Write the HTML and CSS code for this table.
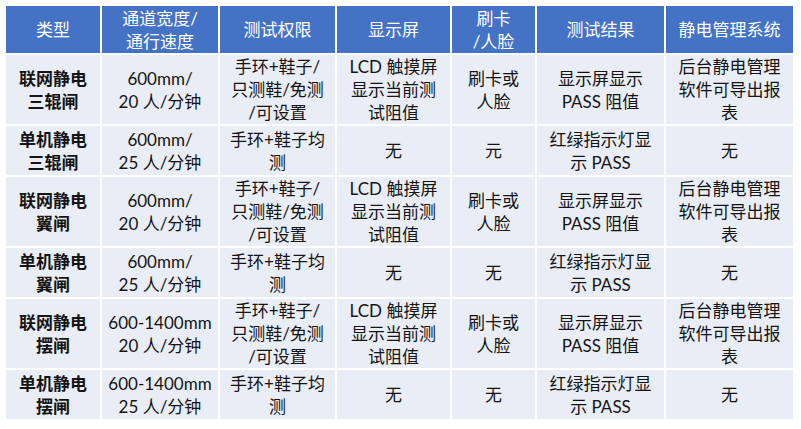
FILE: index.html
```html
<!DOCTYPE html>
<html lang="zh-CN">
<head>
<meta charset="utf-8">
<link rel="stylesheet" href="styles.css">
</head>
<body>
<table class="spec">
  <colgroup>
    <col class="c1"><col class="c2"><col class="c3"><col class="c4"><col class="c5"><col class="c6"><col class="c7">
  </colgroup>
  <thead>
    <tr>
      <th>类型</th>
      <th>通道宽度/<br>通行速度</th>
      <th>测试权限</th>
      <th>显示屏</th>
      <th>刷卡<br>/人脸</th>
      <th>测试结果</th>
      <th>静电管理系统</th>
    </tr>
  </thead>
  <tbody>
    <tr class="r3">
      <td class="type">联网静电<br>三辊闸</td>
      <td>600mm/<br>20 人/分钟</td>
      <td>手环+鞋子/<br>只测鞋/免测<br>/可设置</td>
      <td>LCD 触摸屏<br>显示当前测<br>试阻值</td>
      <td>刷卡或<br>人脸</td>
      <td>显示屏显示<br>PASS 阻值</td>
      <td>后台静电管理<br>软件可导出报<br>表</td>
    </tr>
    <tr class="r2">
      <td class="type">单机静电<br>三辊闸</td>
      <td>600mm/<br>25 人/分钟</td>
      <td>手环+鞋子均<br>测</td>
      <td>无</td>
      <td>元</td>
      <td>红绿指示灯显<br>示 PASS</td>
      <td>无</td>
    </tr>
    <tr class="r3">
      <td class="type">联网静电<br>翼闸</td>
      <td>600mm/<br>20 人/分钟</td>
      <td>手环+鞋子/<br>只测鞋/免测<br>/可设置</td>
      <td>LCD 触摸屏<br>显示当前测<br>试阻值</td>
      <td>刷卡或<br>人脸</td>
      <td>显示屏显示<br>PASS 阻值</td>
      <td>后台静电管理<br>软件可导出报<br>表</td>
    </tr>
    <tr class="r2">
      <td class="type">单机静电<br>翼闸</td>
      <td>600mm/<br>25 人/分钟</td>
      <td>手环+鞋子均<br>测</td>
      <td>无</td>
      <td>无</td>
      <td>红绿指示灯显<br>示 PASS</td>
      <td>无</td>
    </tr>
    <tr class="r3">
      <td class="type">联网静电<br>摆闸</td>
      <td>600-1400mm<br>20 人/分钟</td>
      <td>手环+鞋子/<br>只测鞋/免测<br>/可设置</td>
      <td>LCD 触摸屏<br>显示当前测<br>试阻值</td>
      <td>刷卡或<br>人脸</td>
      <td>显示屏显示<br>PASS 阻值</td>
      <td>后台静电管理<br>软件可导出报<br>表</td>
    </tr>
    <tr class="r2">
      <td class="type">单机静电<br>摆闸</td>
      <td>600-1400mm<br>25 人/分钟</td>
      <td>手环+鞋子均<br>测</td>
      <td>无</td>
      <td>无</td>
      <td>红绿指示灯显<br>示 PASS</td>
      <td>无</td>
    </tr>
  </tbody>
</table>
</body>
</html>
```
FILE: styles.css
```css
html, body {
  margin: 0;
  padding: 0;
  background: #ffffff;
}
body {
  padding: 4px 0 0 4px;
  font-family: "Lato", "Noto Sans CJK SC", sans-serif;
  color: #141414;
}
.spec {
  border-collapse: collapse;
  table-layout: fixed;
  width: 789px;
}
.c1 { width: 96px; }
.c2 { width: 118px; }
.c3 { width: 117px; }
.c4 { width: 115px; }
.c5 { width: 85px; }
.c6 { width: 129px; }
.c7 { width: 129px; }
.spec th,
.spec td {
  border: 2px solid #ffffff;
  text-align: center;
  vertical-align: middle;
  font-size: 17px;
  line-height: 23px;
  padding: 0;
  white-space: nowrap;
}
.spec th {
  background: #4472c4;
  color: #ffffff;
  font-weight: normal;
  height: 47px;
}
.spec td {
  background: #e9edf6;
}
.spec td.type {
  font-weight: bold;
}
.r3 td { height: 69px; }
.r2 td { height: 49px; }
```
